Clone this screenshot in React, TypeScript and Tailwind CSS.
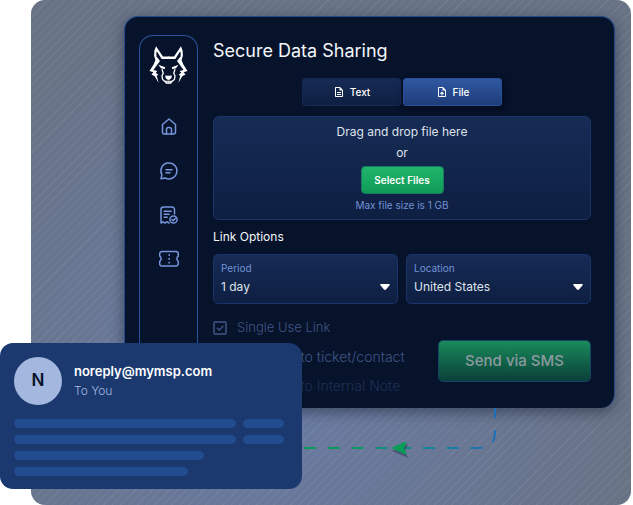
import type { ReactNode } from 'react';
import { MdOutlineDescription, MdOutlineUploadFile } from 'react-icons/md';

function WolfLogo() {
  const half = (
    <>
      <path d="M49 19 L44 32 L43 48 L47 61 L42 74 L29 94 L41 98 L35 105 L45 110 L57 131 L51 109 L56 106 L48 100 L53 94 L41 91 L52 76 L61 64 L56 57 L50 50 L50 36 L53 36 L66 58 H88 V50 H70 Z" fill="white" />
      <path d="M56 75 L77 83 L75 89 L64 86 Z" fill="white" />
      <path d="M67 89 L71 101 L67 109 L69 120 L76 126" fill="none" stroke="white" strokeWidth="4" />
      <path d="M77 107 L82 109 H88 V121 H84 L78 116 Z" fill="white" />
      <path d="M73 124 H88 V127 H80 L82 129 H88 V133 H79 Z" fill="white" />
    </>
  );
  return (
    <svg viewBox="28 18 118 116" className="h-[38px] w-[39px]" aria-label="Wolf logo" role="img">
      <g>{half}</g>
      <g transform="translate(174 0) scale(-1 1)">{half}</g>
    </svg>
  );
}

function NavIcon({ label, children }: { label: string; children: ReactNode }) {
  return (
    <a href="#" aria-label={label} className="text-[#7795dc]">
      <svg viewBox="0 0 20 20" className="size-5" fill="none" stroke="currentColor" strokeWidth="1.5" strokeLinecap="round" strokeLinejoin="round">
        {children}
      </svg>
    </a>
  );
}

function Sidebar() {
  return (
    <nav className="flex w-[59px] shrink-0 flex-col items-center rounded-t-[14px] border border-b-0 border-[#28539b] pt-[10px]">
      <WolfLogo />
      <div className="mt-[33px] flex flex-col gap-6">
        <NavIcon label="Home">
          <path d="M3.500 7.500 10 2l6.500 5.500V15a2 2 0 0 1-2 2h-9a2 2 0 0 1-2-2z" />
          <path d="M7.500 17v-4.500q0-2 2-2h1q2 0 2 2V17" />
        </NavIcon>
        <NavIcon label="Messages">
          <path d="M2.900 13.800A8 8 0 1 1 6.200 17L2 17.800z" />
          <path d="M7 8.700h6M7 11.700h4" />
        </NavIcon>
        <NavIcon label="Reports">
          <path d="M15.500 9V4.500a2.500 2.500 0 0 0-2.500-2.500H4.500A2.500 2.500 0 0 0 2 4.500V18l2-1.200 2 1.200 2-1.200 2 1.200" />
          <path d="M5.200 6.200h7M5.200 9.200h5M5.200 12.200h3" />
          <circle cx="14.500" cy="14.500" r="3.600" />
          <path d="m12.900 14.500 1.200 1.200 2.200-2.300" />
        </NavIcon>
        <NavIcon label="Tickets">
          <path d="M3 2.500h14a2.300 2.300 0 0 1 2.300 2.300v2.400a3 3 0 0 0 0 5.100v2.400A2.300 2.300 0 0 1 17 17H3a2.300 2.300 0 0 1-2.300-2.300v-2.400a3 3 0 0 0 0-5.100V4.800A2.300 2.300 0 0 1 3 2.500z" />
          <path d="M10.200 6v.1M10.200 9.800v.1M10.200 13.600v.1" strokeWidth="1.800" />
        </NavIcon>
      </div>
    </nav>
  );
}

function SelectBox({ id, label, value }: { id: string; label: string; value: string }) {
  return (
    <div className="grid h-[50px] flex-1 grid-cols-[1fr_auto] items-center rounded-[5px] border border-[#1a3469] bg-linear-to-b from-[#162b55] to-[#0e1f42] px-[7px] pt-1 pb-[5px]">
      <label htmlFor={id} className="col-span-2 text-[10px] leading-4 text-[#7391d5]">
        {label}
      </label>
      <select id={id} className="col-span-2 col-start-1 row-start-2 w-full appearance-none bg-transparent text-[12px] leading-5 text-[#dfe3ec] outline-none">
        <option>{value}</option>
      </select>
      <svg viewBox="0 0 10 6" className="pointer-events-none col-start-2 row-start-2 h-[6px] w-[10px]">
        <path d="M1 0h8q1 0 .8 1L6 5.500Q5 6.400 4 5.500L.2 1Q0 0 1 0z" fill="white" />
      </svg>
    </div>
  );
}

function CheckRow({ label, className }: { label: string; className: string }) {
  return (
    <label className={`flex h-[29px] items-center gap-[10px] font-light ${className}`}>
      <span className="grid size-[14px] place-items-center">
        <input type="checkbox" defaultChecked className="peer col-start-1 row-start-1 size-[14px] appearance-none rounded-[2px] border-2 border-current opacity-80" />
        <svg viewBox="0 0 14 14" className="pointer-events-none col-start-1 row-start-1 size-[14px] opacity-0 peer-checked:opacity-100" fill="none" stroke="currentColor" strokeWidth="1.500">
          <path d="m4 6.700 2.200 2.500L10.300 5" />
        </svg>
      </span>
      {label}
    </label>
  );
}

function SharingPanel() {
  return (
    <section className="flex overflow-hidden rounded-[14px] border border-b-0 border-[#244a8c] bg-[#07132b] pt-[18px] pr-[23px] pl-[14px]">
      <Sidebar />
      <div className="ml-[15px] min-w-0 flex-1">
        <h1 className="mt-1 text-[18px] leading-6 text-[#f4f6fa]">Secure Data Sharing</h1>
        <div className="mt-[15px] flex justify-center gap-[2px]">
          <button className="flex h-7 w-[99px] items-center justify-center gap-[5px] rounded-[3px] border border-[#14294f] bg-linear-to-b from-[#162b54] to-[#0e1f42] text-[10px] font-medium text-white">
            <MdOutlineDescription className="size-3" />
            Text
          </button>
          <button className="flex h-7 w-[99px] items-center justify-center gap-[5px] rounded-[3px] border border-[#294f96] bg-linear-to-b from-[#3058a2] to-[#1e3d79] text-[10px] font-medium text-white shadow-[2px_3px_6px_#030a1c]">
            <MdOutlineUploadFile className="size-3" />
            File
          </button>
        </div>
        <div className="mt-[10px] flex flex-col items-center rounded-[6px] border border-[#1a3469] bg-linear-to-b from-[#162b55] to-[#0e1f42] pt-1 pb-[6px] text-[12px] text-[#dfe3ec]">
          <p className="leading-[21px]">Drag and drop file here</p>
          <p className="leading-[21px]">or</p>
          <button className="mt-[3px] h-7 w-[83px] rounded-[4px] border border-[#1b7b62] bg-linear-to-b from-[#20b56c] to-[#0f9b56] text-[10px] font-semibold text-white">
            Select Files
          </button>
          <p className="mt-[3px] text-[10px] leading-4 text-[#7391d5]">Max file size is 1 GB</p>
        </div>
        <h2 className="mt-2 text-[12px] leading-[18px] text-[#f4f6fa]">Link Options</h2>
        <div className="mt-2 flex gap-2">
          <SelectBox id="period" label="Period" value="1 day" />
          <SelectBox id="location" label="Location" value="United States" />
        </div>
        <div className="mt-[9px] flex justify-between pb-2">
          <div>
            <CheckRow label="Single Use Link" className="text-[13px] text-[#3f5483]" />
            <CheckRow label="Add links to ticket/contact" className="text-[14px] text-[#3f5687]" />
            <CheckRow label="Add links to Internal Note" className="text-[14px] text-[#1e3055]" />
          </div>
          <button className="mt-[27px] h-[42px] w-[153px] shrink-0 rounded-[5px] border border-[#174368] bg-linear-to-b from-[#198b5a] to-[#0a4039] text-[15px] font-medium text-[#8c9a9f]">
            Send via SMS
          </button>
        </div>
      </div>
    </section>
  );
}

function EmailCard() {
  return (
    <article className="absolute top-[343px] left-0 w-[302px] rounded-[13px] bg-[#1b396f] px-[14px] pt-[14px] pb-[13px]">
      <div className="flex items-center gap-3">
        <div className="grid size-12 place-items-center rounded-full bg-[#a4b8df] text-[17px] font-semibold text-[#07132b]">N</div>
        <div>
          <p className="text-[13px] leading-5 font-semibold text-white">noreply@mymsp.com</p>
          <p className="text-[12px] leading-5 font-light text-[#a4b8df]">To You</p>
        </div>
      </div>
      <div className="mt-[14px] flex flex-col gap-[7px]">
        <div className="flex gap-[7px]">
          <span className="h-[9px] w-[222px] rounded-full bg-[#234b90]" />
          <span className="h-[9px] w-[41px] rounded-full bg-[#234b90]" />
        </div>
        <div className="flex gap-[7px]">
          <span className="h-[9px] w-[222px] rounded-full bg-[#234b90]" />
          <span className="h-[9px] w-[41px] rounded-full bg-[#234b90]" />
        </div>
        <span className="h-[9px] w-[190px] rounded-full bg-[#234b90]" />
        <span className="h-[9px] w-[174px] rounded-full bg-[#234b90]" />
      </div>
    </article>
  );
}

function DeliveryArrow() {
  return (
    <svg viewBox="0 0 210 60" className="absolute top-[408px] left-[300px] h-[60px] w-[210px]" fill="none" aria-hidden="true">
      <defs>
        <linearGradient id="trail" x1="0" y1="0" x2="196" y2="0" gradientUnits="userSpaceOnUse">
          <stop stopColor="#069d55" />
          <stop offset="0.300" stopColor="#0d9563" />
          <stop offset="0.600" stopColor="#168891" />
          <stop offset="1" stopColor="#1d6fba" />
        </linearGradient>
      </defs>
      <path d="M4 40H178Q195 40 195 24V0" stroke="url(#trail)" strokeWidth="2" strokeDasharray="12 11.800" />
      <path d="M91 41 107 34 104 41 107 48z" fill="#24334d" opacity="0.500" transform="translate(1 2)" />
      <path d="M91 40 107 33 104 40 107 47z" fill="#089d55" />
    </svg>
  );
}

export default function App() {
  return (
    <main className="relative bg-white font-['Inter','Liberation_Sans',sans-serif]">
      <div className="mr-[2px] ml-[31px] rounded-[14px] bg-[repeating-linear-gradient(135deg,#ffffff10_0px,#ffffff10_1px,transparent_1px,transparent_6px),radial-gradient(circle_at_40%_75%,#697ba4,#687386_70%)] pt-4 pr-4 pb-[97px] pl-[93px]">
        <div className="rounded-[14px] shadow-[0_4px_14px_#1f293d99]">
          <SharingPanel />
        </div>
      </div>
      <DeliveryArrow />
      <EmailCard />
    </main>
  );
}
